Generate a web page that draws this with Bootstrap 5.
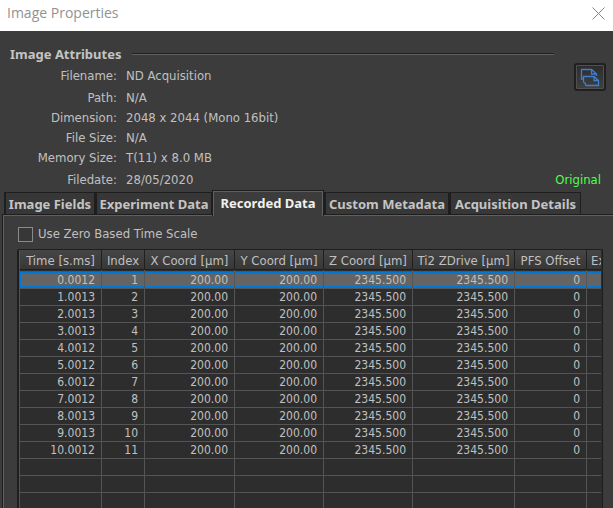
<!DOCTYPE html>
<html lang="en">
<head>
<meta charset="utf-8">
<meta name="viewport" content="width=device-width, initial-scale=1">
<title>Image Properties</title>
<link href="https://cdn.jsdelivr.net/npm/bootstrap@5.3.0/dist/css/bootstrap.min.css" rel="stylesheet">
<style>
body{font-family:"DejaVu Sans Condensed","Noto Sans",sans-serif;font-size:13px;line-height:16px;color:#c0c0c0;background:#3c3c3c}
.titlebar{height:31px;background:#fff;color:#929292;padding:0 8px 5px 7px}
.titlebar h1{font-family:"Open Sans",sans-serif;font-size:14px;line-height:20px}
.close-btn{width:13px;height:13px;line-height:0}
.attrs{padding:14px 9px 0 10px}
.attrs h2,.tabs button{font-family:"Noto Sans",sans-serif;font-size:13px;font-weight:700;line-height:18px}
.attrs h2{color:#c4c4c4}
.rule{height:2px;background:#202020;border-bottom:1px solid #606060;margin:0 50px 0 11px}
.facts{display:grid;grid-template-columns:107px 1fr;column-gap:9px;grid-template-rows:22px 20px 20px 20px 22px 19px;margin-top:5px}
.facts dt{font-weight:400;text-align:right}
.copy-btn{right:7px;top:63px;width:32px;height:28px;border:2px solid #202020;border-radius:3px;background:linear-gradient(#2c2c2c,#404040);box-shadow:inset 0 0 0 1px #505050}
.original{color:#4dff4d;right:12px;top:172px}
.tabs{padding-left:4px;height:24px;margin-top:-1px}
.tabs button{height:22px;border:1px solid #1e1e1e;border-left-width:2px;border-bottom:0;background:#373737;color:#c4c4c4;padding:0;text-align:center;white-space:nowrap}
.tabs .w1{width:91px}.tabs .w2{width:117px}.tabs .w3{width:112px}.tabs .w4{width:125px}.tabs .w5{width:132px}
.tabs button.active{height:26px;margin-bottom:-2px;border-left-width:1px;background:#3c3c3c;color:#f0f0f0;box-shadow:inset 1px 1px #606060,inset -1px 0 #606060;padding-bottom:2px;position:relative}
.pane{margin-left:2px;border-top:1px solid #1e1e1e;border-left:1px solid #1e1e1e;box-shadow:inset 1px 1px #606060;padding:11px 10px 0 14px}
.opt{gap:5px;height:16px;padding-left:1px}
.opt input{appearance:none;width:15px;height:15px;border:1px solid #8a8a8a;background:#373737;margin:0}
.grid-box{margin-top:7px;border:1px solid #1e1e1e;border-bottom:0;border-width:1px 1px 0 2px;border-radius:2px 2px 0 0;background:#2d2d2d;padding-right:1px}
.data{table-layout:fixed;width:100%;border-collapse:separate;border-spacing:0}
.data th{font-weight:400;height:20px;padding:2px 4px 0;line-height:16px;background:linear-gradient(#464646,#373737);border-right:1px solid #202020;border-bottom:1px solid #202020;white-space:nowrap;overflow:hidden;text-align:center}
.data th:last-child{text-align:left;border-right:0}
.data .gap-line td{height:2px;padding:0;border-bottom:1px solid #545454}
.data td{font-size:12px;height:17px;line-height:16px;padding:0 6px 0 0;text-align:right;border-right:1px solid #545454;border-bottom:1px solid #545454}
.data td:last-child{border-right:0}
.data tr>:first-child{border-left:1px solid #545454}
.data .sel td{background:#646464;box-shadow:inset 0 2px #0078d7,inset 0 -2px #0078d7}
.data .sel td:first-child{box-shadow:inset 0 2px #0078d7,inset 0 -2px #0078d7,inset 1px 0 #0078d7}
.c1{width:83px}.c2{width:43px}.c3{width:90px}.c4{width:89px}.c5{width:89px}.c6{width:102px}.c7{width:72px}
</style>
<script src="https://cdn.jsdelivr.net/npm/bootstrap@5.3.0/dist/js/bootstrap.bundle.min.js"></script>
</head>
<body class="vh-100 overflow-hidden d-flex flex-column position-relative">
<header class="titlebar d-flex align-items-center justify-content-between flex-shrink-0">
  <h1 class="m-0 fw-normal">Image Properties</h1>
  <button type="button" class="close-btn border-0 p-0 bg-transparent" aria-label="Close"><svg width="13" height="13" viewBox="0 0 13 13" stroke="#858585" fill="none"><path d="M.5.5l12 12M12.500.5l-12 12"/></svg></button>
</header>
<section class="attrs flex-shrink-0">
  <div class="d-flex align-items-center"><h2 class="m-0">Image Attributes</h2><div class="rule flex-grow-1"></div></div>
  <dl class="facts mb-0">
    <dt>Filename:</dt><dd class="m-0">ND Acquisition</dd>
    <dt>Path:</dt><dd class="m-0">N/A</dd>
    <dt>Dimension:</dt><dd class="m-0">2048 x 2044 (Mono 16bit)</dd>
    <dt>File Size:</dt><dd class="m-0">N/A</dd>
    <dt>Memory Size:</dt><dd class="m-0">T(11) x 8.0 MB</dd>
    <dt>Filedate:</dt><dd class="m-0">28/05/2020</dd>
  </dl>
</section>
<button type="button" class="copy-btn position-absolute p-0 d-flex align-items-center justify-content-center" aria-label="Copy"><svg width="20" height="20" viewBox="0 0 20 20" fill="none" stroke="#3f7fd0" stroke-width="1.300"><path d="M3.500 12H1.500V2.500H11.500L16.500 7V9M11.500 2.500V7H16.500M5.500 18.500V16.500L3.500 15V9.500H14L18.500 13.500V18.500H5.500M14 9.500V13.500H18.500"/></svg></button>
<span class="original position-absolute">Original</span>
<div class="tabs d-flex align-items-end flex-shrink-0" role="tablist">
  <button type="button" role="tab" class="w1">Image Fields</button>
  <button type="button" role="tab" class="w2">Experiment Data</button>
  <button type="button" role="tab" class="w3 active" aria-selected="true">Recorded Data</button>
  <button type="button" role="tab" class="w4">Custom Metadata</button>
  <button type="button" role="tab" class="w5">Acquisition Details</button>
</div>
<main class="pane flex-grow-1 d-flex flex-column overflow-hidden">
  <div class="opt d-flex align-items-center flex-shrink-0"><input type="checkbox" id="zero"><label for="zero">Use Zero Based Time Scale</label></div>
  <div class="grid-box flex-grow-1 overflow-hidden">
    <table class="data">
      <colgroup><col class="c1"><col class="c2"><col class="c3"><col class="c4"><col class="c5"><col class="c6"><col class="c7"><col></colgroup>
      <thead><tr><th>Time [s.ms]</th><th>Index</th><th>X Coord [µm]</th><th>Y Coord [µm]</th><th>Z Coord [µm]</th><th>Ti2 ZDrive [µm]</th><th>PFS Offset</th><th>Ex</th></tr></thead>
      <tbody>
        <tr class="gap-line"><td></td><td></td><td></td><td></td><td></td><td></td><td></td><td></td></tr>
        <tr class="sel"><td>0.0012</td><td>1</td><td>200.00</td><td>200.00</td><td>2345.500</td><td>2345.500</td><td>0</td><td></td></tr>
        <tr><td>1.0013</td><td>2</td><td>200.00</td><td>200.00</td><td>2345.500</td><td>2345.500</td><td>0</td><td></td></tr>
        <tr><td>2.0013</td><td>3</td><td>200.00</td><td>200.00</td><td>2345.500</td><td>2345.500</td><td>0</td><td></td></tr>
        <tr><td>3.0013</td><td>4</td><td>200.00</td><td>200.00</td><td>2345.500</td><td>2345.500</td><td>0</td><td></td></tr>
        <tr><td>4.0012</td><td>5</td><td>200.00</td><td>200.00</td><td>2345.500</td><td>2345.500</td><td>0</td><td></td></tr>
        <tr><td>5.0012</td><td>6</td><td>200.00</td><td>200.00</td><td>2345.500</td><td>2345.500</td><td>0</td><td></td></tr>
        <tr><td>6.0012</td><td>7</td><td>200.00</td><td>200.00</td><td>2345.500</td><td>2345.500</td><td>0</td><td></td></tr>
        <tr><td>7.0012</td><td>8</td><td>200.00</td><td>200.00</td><td>2345.500</td><td>2345.500</td><td>0</td><td></td></tr>
        <tr><td>8.0013</td><td>9</td><td>200.00</td><td>200.00</td><td>2345.500</td><td>2345.500</td><td>0</td><td></td></tr>
        <tr><td>9.0013</td><td>10</td><td>200.00</td><td>200.00</td><td>2345.500</td><td>2345.500</td><td>0</td><td></td></tr>
        <tr><td>10.0012</td><td>11</td><td>200.00</td><td>200.00</td><td>2345.500</td><td>2345.500</td><td>0</td><td></td></tr>
        <tr><td></td><td></td><td></td><td></td><td></td><td></td><td></td><td></td></tr>
        <tr><td></td><td></td><td></td><td></td><td></td><td></td><td></td><td></td></tr>
        <tr><td></td><td></td><td></td><td></td><td></td><td></td><td></td><td></td></tr>
      </tbody>
    </table>
  </div>
</main>
</body>
</html>
